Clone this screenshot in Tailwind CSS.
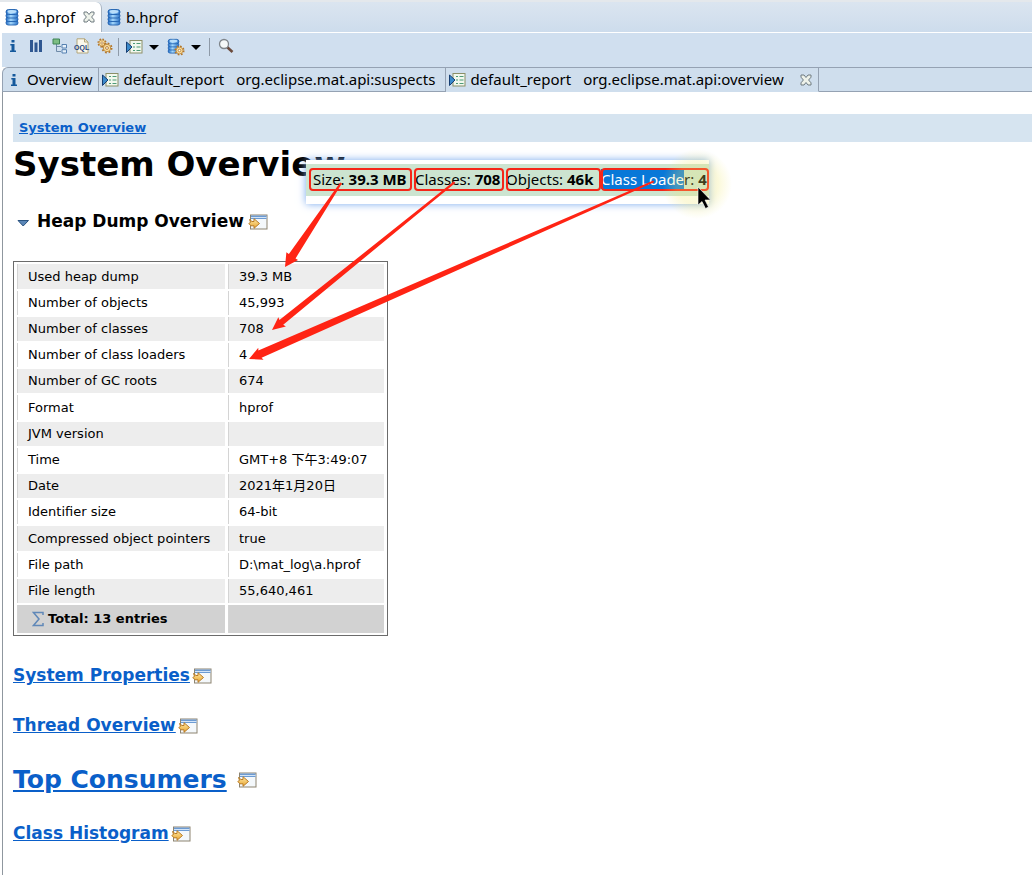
<!DOCTYPE html>
<html lang="en">
<head>
<meta charset="utf-8">
<meta name="viewport" content="width=device-width, initial-scale=1">
<title>a.hprof – System Overview</title>
<script src="https://cdn.jsdelivr.net/npm/@tailwindcss/browser@4"></script>
</head>
<body class="relative flex min-h-screen flex-col overflow-x-hidden bg-white font-['DejaVu_Sans','Noto_Sans_CJK_SC',sans-serif] text-black">

<svg class="absolute size-0" aria-hidden="true">
  <defs>
    <linearGradient id="blue" x1="0" x2="1"><stop offset="0" stop-color="#1c68c6"/><stop offset=".4" stop-color="#a5d8fb"/><stop offset="1" stop-color="#2a72c8"/></linearGradient>
    <linearGradient id="gold" x1="0" y1="0" x2="0" y2="1"><stop offset="0" stop-color="#ffe9a6"/><stop offset="1" stop-color="#e9a52e"/></linearGradient>
    <symbol id="db" viewBox="0 0 14 18">
      <g fill="url(#blue)" stroke="#1d5fae" stroke-width=".9">
        <rect x="1" y="12.5" width="12" height="4.5" rx="2.2"/><rect x="1" y="9" width="12" height="4.5" rx="2.2"/><rect x="1" y="5.5" width="12" height="4.5" rx="2.2"/><rect x="1" y="1.5" width="12" height="5" rx="2.5"/>
      </g>
      <ellipse cx="7" cy="3.5" rx="4.5" ry="1.5" fill="#b9defa"/>
    </symbol>
    <symbol id="info" viewBox="0 0 10 16"><path d="M3.500 2h3v2.600h-3zM2.300 6h4.200v6.600H8v1.400H2v-1.400h1.500V7.400H2.300z" fill="#15599c"/></symbol>
    <symbol id="close" viewBox="0 0 12 12"><path d="M1 1h3l2 2.500L8 1h3v2.200L8.600 6 11 8.800V11H8L6 8.500 4 11H1V8.800L3.400 6 1 3.200z" fill="#eef2ea" stroke="#6e7a80" stroke-width="1"/></symbol>
    <symbol id="report" viewBox="0 0 17 16">
      <rect x="4.500" y="1.500" width="12" height="12.500" fill="#f2f8ee" stroke="#8b8f68"/>
      <path d="M7.500 4.500h2M11 4.500h4M7.500 8h2M11 8h4M7.500 11.500h2M11 11.500h4" stroke="#4d9a77" stroke-width="1.200"/>
      <path d="M1 3v10.500L6.500 8z" fill="#3a8acb" stroke="#173f73"/>
    </symbol>
    <symbol id="gear" viewBox="0 0 12 12">
      <circle cx="6" cy="6" r="4.500" fill="none" stroke="#b3762a" stroke-width="2" stroke-dasharray="1.770 1.770"/>
      <circle cx="6" cy="6" r="3.700" fill="#f9dc9c" stroke="#b9802f" stroke-width=".8"/>
      <circle cx="6" cy="6" r="1.400" fill="#fff" stroke="#a8691c" stroke-width=".8"/>
    </symbol>
    <symbol id="open" viewBox="0 0 20 16">
      <rect x="2.500" y="1" width="16.500" height="14" fill="#f4f8fb" stroke="#8d8471"/>
      <path d="M3 1.500h15.500V5H3z" fill="#6c9bd3"/><path d="M3 3.500h15.500" stroke="#d3e4f7"/>
      <path d="M1.500 5.500l2.500 2h2V4.700l5.500 4.800L6 14.300v-2.500H3L.8 9.500l1.700-1.200z" fill="url(#gold)" stroke="#b97b25"/>
    </symbol>
  </defs>
</svg>

<nav aria-label="Editors" class="flex h-8 items-stretch border-t-2 border-[#e4e8ec] bg-linear-to-b from-[#dbe5f0] to-[#cddcec] font-['Noto_Sans',sans-serif] text-[15px]">
  <div class="flex items-center rounded-tr-md border-r border-[#a9b5c2] bg-white pl-1">
    <button class="flex items-center gap-1"><svg class="h-[18px] w-4"><use href="#db"/></svg>a.hprof</button>
    <button aria-label="Close a.hprof" class="pr-1.5 pl-2"><svg class="size-3"><use href="#close"/></svg></button>
  </div>
  <button class="flex items-center gap-1 pl-1"><svg class="h-[18px] w-4"><use href="#db"/></svg>b.hprof</button>
</nav>

<div role="toolbar" aria-label="Heap dump tools" class="ml-0.5 flex h-[35px] items-start border-t border-white bg-[#d0dfef] pt-[5px]">
  <button aria-label="Overview" class="ml-1.5"><svg class="h-4 w-2.5"><use href="#info"/></svg></button>
  <button aria-label="Histogram" class="ml-2.5"><svg class="size-4" viewBox="0 0 16 16"><path d="M2 2h3v12H2zM6.500 4.500h3V14h-3zM11 2h3v12h-3z" fill="#2f5791"/></svg></button>
  <button aria-label="Dominator tree" class="ml-2"><svg class="size-4" viewBox="0 0 16 16"><path d="M4.500 6v7.500H9M4.500 8.500H9" fill="none" stroke="#6f8aa8"/><path d="M1 1h6.500v5H1z" fill="#7dbd83" stroke="#3f8455"/><path d="M10 6.500h4.500v3.500H10zM10 11.700h4.500v3.300H10z" fill="#e8f2fb" stroke="#5681b1"/></svg></button>
  <button aria-label="OQL" class="ml-1.5"><svg class="size-4" viewBox="0 0 16 16"><path d="M3 .8h7.500L14 4v11H3z" fill="#fbf8ec" stroke="#b3a67b"/><path d="M10.500.8V4H14" fill="none" stroke="#b3a67b"/><text x="0" y="12" font-family="Liberation Sans" font-weight="700" font-size="7" fill="#26457d">OQL</text></svg></button>
  <button aria-label="Run expert system test" class="ml-1.5"><svg class="size-[18px]" viewBox="0 0 18 18"><use href="#gear" x="1" y="0" width="10" height="10"/><use href="#gear" x="5" y="4" width="12" height="12"/></svg></button>
  <span class="mr-1.5 ml-1 h-[18px] w-px bg-[#8e9aa8]"></span>
  <button aria-label="Run report" class="flex items-center gap-1.5"><svg class="h-4 w-[18px]"><use href="#report"/></svg><svg class="h-[18px] w-2.5" viewBox="0 0 10 18"><path d="M0 7h10l-5 5z"/></svg></button>
  <button aria-label="Query browser" class="ml-2 flex items-center gap-1.5"><svg class="size-[18px]" viewBox="0 0 18 18"><use href="#db" x="0" y="0" width="13" height="16"/><use href="#gear" x="7" y="7" width="11" height="11"/></svg><svg class="h-[18px] w-2.5" viewBox="0 0 10 18"><path d="M0 7h10l-5 5z"/></svg></button>
  <span class="mx-2 h-[18px] w-px bg-[#8e9aa8]"></span>
  <button aria-label="Find object by address"><svg class="size-4" viewBox="0 0 16 16"><path d="M9 9l5.500 5" stroke="#6b4a3c" stroke-width="2.600"/><circle cx="6" cy="6" r="4.500" fill="#f5f8f8" stroke="#7f858a" stroke-width="1.300"/></svg></button>
</div>

<nav aria-label="Pages" class="ml-0.5 flex h-[25px] items-stretch rounded-tl-md border-t border-l border-[#95a2b3] bg-[#cfdeed] font-['Noto_Sans',sans-serif] text-[15px]">
  <button class="flex items-center gap-2 border-r border-b border-[#95a2b3] pr-1.5 pl-1.5"><svg class="h-4 w-2.5"><use href="#info"/></svg>Overview</button>
  <button class="flex items-center gap-1 border-r border-b border-[#95a2b3] pr-2.5 pl-0.5"><svg class="h-4 w-[18px]"><use href="#report"/></svg><span class="flex gap-3"><span>default_report</span><span>org.eclipse.mat.api:suspects</span></span></button>
  <div class="flex items-center border-r border-b border-r-[#95a2b3] border-b-transparent pl-0.5">
    <button class="flex items-center gap-1"><svg class="h-4 w-[18px]"><use href="#report"/></svg><span class="flex gap-3"><span>default_report</span><span>org.eclipse.mat.api:overview</span></span></button>
    <button aria-label="Close overview report" class="pr-1.5 pl-4"><svg class="size-3"><use href="#close"/></svg></button>
  </div>
  <span class="grow border-b border-[#95a2b3]"></span>
</nav>

<main class="ml-0.5 grow border-l border-[#8f979f] pt-[22px] pl-2.5">
  <div class="flex h-7 items-center bg-[#d6e4f0] pl-1.5 text-[13px] font-bold"><a href="#top" class="text-[#0a5fc9] underline">System Overview</a></div>
  <h1 id="top" class="text-[34px] leading-[44px] font-bold">System Overview</h1>

  <h2 class="mt-5 flex h-8 items-center gap-1 text-[17px] font-bold">
    <button aria-label="Collapse section" class="mr-1 ml-1"><svg class="h-4 w-3" viewBox="0 0 12 16"><path d="M1 6.500h10.500L6.200 12z" fill="#5b87b8" stroke="#29527f"/></svg></button>
    Heap Dump Overview
    <a href="#heap" aria-label="Open heap dump overview"><svg class="h-4 w-5"><use href="#open"/></svg></a>
  </h2>

  <table id="heap" class="mt-[23px] w-[375px] border-separate border-spacing-x-[3px] border-spacing-y-0.5 border border-[#6b6b6b] text-left text-[13px] leading-4 [&_td]:border-l [&_td]:border-[#d4d4d4] [&_td]:px-2.5 [&_th]:w-[208px] [&_th]:border-l [&_th]:border-[#d4d4d4] [&_th]:px-2.5 [&_th]:font-normal [&_tr]:h-6 [&_tbody_tr:nth-child(5n+1)]:h-[25px] [&_tbody_tr:nth-child(odd)]:bg-[#ededed]">
    <tbody>
      <tr><th scope="row">Used heap dump</th><td>39.3 MB</td></tr>
      <tr><th scope="row">Number of objects</th><td>45,993</td></tr>
      <tr><th scope="row">Number of classes</th><td>708</td></tr>
      <tr><th scope="row">Number of class loaders</th><td>4</td></tr>
      <tr><th scope="row">Number of GC roots</th><td>674</td></tr>
      <tr><th scope="row">Format</th><td>hprof</td></tr>
      <tr><th scope="row">JVM version</th><td></td></tr>
      <tr><th scope="row">Time</th><td>GMT+8 下午3:49:07</td></tr>
      <tr><th scope="row">Date</th><td>2021年1月20日</td></tr>
      <tr><th scope="row">Identifier size</th><td>64-bit</td></tr>
      <tr><th scope="row">Compressed object pointers</th><td>true</td></tr>
      <tr><th scope="row">File path</th><td>D:\mat_log\a.hprof</td></tr>
      <tr><th scope="row">File length</th><td>55,640,461</td></tr>
    </tbody>
    <tfoot>
      <tr class="bg-[#d2d2d2]"><td class="h-7 font-bold"><span class="flex items-center gap-1 pl-1"><svg class="h-4 w-3" viewBox="0 0 12 16"><path d="M11 4V1.500H1.500L7 8l-5.500 6.500H11V12" fill="none" stroke="#6088b8" stroke-width="1.500"/></svg>Total: 13 entries</span></td><td></td></tr>
    </tfoot>
  </table>

  <h2 class="mt-6 flex h-8 items-center gap-0.5 text-[17px] font-bold"><a href="#properties" class="text-[#0a5fc9] underline">System Properties</a><a href="#properties" aria-label="Open system properties"><svg class="h-4 w-5"><use href="#open"/></svg></a></h2>
  <h2 class="mt-[18px] flex h-8 items-center gap-0.5 text-[17px] font-bold"><a href="#threads" class="text-[#0a5fc9] underline">Thread Overview</a><a href="#threads" aria-label="Open thread overview"><svg class="h-4 w-5"><use href="#open"/></svg></a></h2>
  <h1 class="mt-[18px] flex h-10 items-center gap-2.5 text-[25px] font-bold"><a href="#consumers" class="text-[#0a5fc9] underline">Top Consumers</a><a href="#consumers" aria-label="Open top consumers"><svg class="h-4 w-5"><use href="#open"/></svg></a></h1>
  <h2 class="mt-[18px] flex h-8 items-center gap-0.5 text-[17px] font-bold"><a href="#histogram" class="text-[#0a5fc9] underline">Class Histogram</a><a href="#histogram" aria-label="Open class histogram"><svg class="h-4 w-5"><use href="#open"/></svg></a></h2>
</main>

<!-- Annotation laid over the report -->
<div class="absolute top-40 left-[306px] w-[403px] bg-white pt-1 pb-2 shadow-[0_0_8px_#79a9ee]">
  <div class="flex h-8 items-start gap-0.5 bg-[#cce4d0] pt-1 pl-[3px] font-['Noto_Sans',sans-serif] text-[15px] leading-[23px] whitespace-nowrap">
    <span class="w-[103px] rounded-sm pl-1 outline-2 -outline-offset-2 outline-[#f52618]">Size: <b>39.3 MB</b></span>
    <span class="w-[90px] rounded-sm pl-px outline-2 -outline-offset-2 outline-[#f52618]">Classes: <b>708</b></span>
    <span class="flex w-[203px]"><span class="w-[95px] rounded-sm outline-2 -outline-offset-2 outline-[#f52618]">Objects: <b>46k</b></span><span class="w-[108px] rounded-sm outline-2 -outline-offset-2 outline-[#f52618]"><mark class="bg-[#0878d8] text-white">Class Loade</mark>r: <b>4</b></span></span>
  </div>
</div>
<svg class="pointer-events-none absolute top-0 left-0 h-[400px] w-[760px]" viewBox="0 0 760 400" aria-hidden="true">
  <defs><radialGradient id="halo"><stop offset=".6" stop-color="#f2e86e" stop-opacity=".26"/><stop offset="1" stop-color="#f2e86e" stop-opacity="0"/></radialGradient></defs>
  <circle cx="697" cy="184" r="35" fill="url(#halo)"/>
  <g fill="#ff2414">
    <path transform="translate(285 267) rotate(-56.300)" d="M0 0L13-7 13-4 101-1V1L13 4 13 7z"/>
    <path transform="translate(272 330) rotate(-39)" d="M0 0L13-6 12-3 235-1V1L12 3 13 6z"/>
    <path transform="translate(249 359) rotate(-23.700)" d="M0 0L13-6.500 12-4 442-1V1L12 4 13 6.500z"/>
  </g>
  <path d="M698 187v18l4-3.500 3.500 7 3-1.500-3.500-7h5.500z" fill="#000" stroke="#fff" stroke-width=".6"/>
</svg>
</body>
</html>
